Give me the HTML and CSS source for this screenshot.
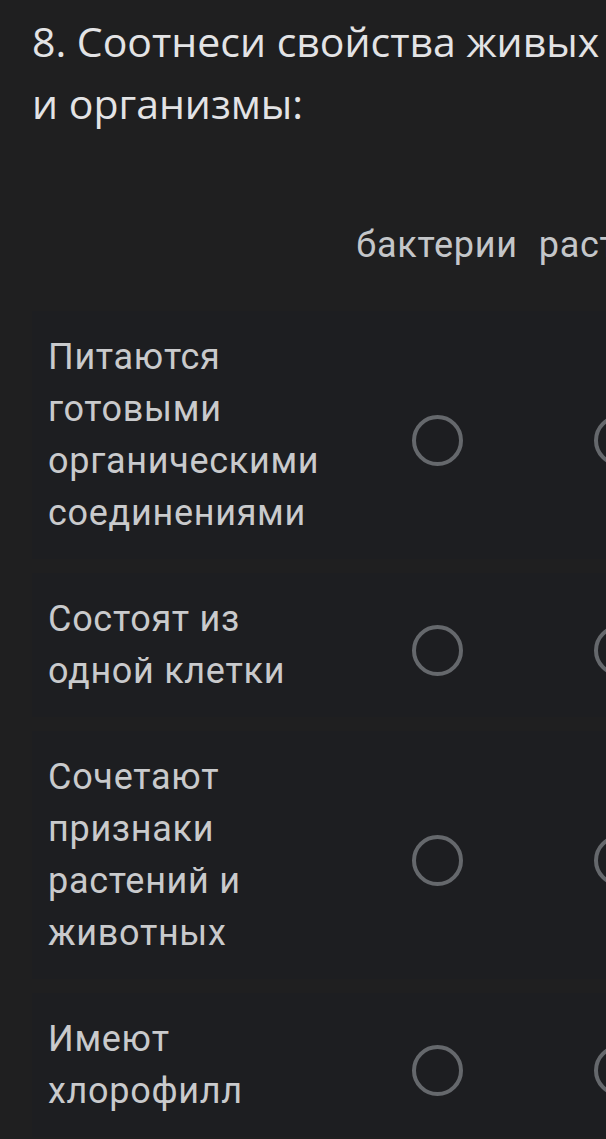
FILE: index.html
```html
<!DOCTYPE html>
<html lang="ru">
<head>
<meta charset="utf-8">
<title>Вопрос 8</title>
<link rel="stylesheet" href="styles.css">
</head>
<body>
<main class="question">
  <h1 class="title">8. Соотнеси свойства живых и организмы:</h1>
  <div class="grid-wrap">
    <div class="grid">
      <div class="grid-head">
        <div class="cell-label"></div>
        <div class="col-title">бактерии</div>
        <div class="col-title">растения</div>
        <div class="col-title">животные</div>
      </div>
      <div class="grid-row">
        <div class="cell-label">Питаются готовыми органическими соединениями</div>
        <div class="cell"><span class="radio"></span></div>
        <div class="cell"><span class="radio"></span></div>
        <div class="cell"><span class="radio"></span></div>
      </div>
      <div class="grid-row">
        <div class="cell-label">Состоят из одной клетки</div>
        <div class="cell"><span class="radio"></span></div>
        <div class="cell"><span class="radio"></span></div>
        <div class="cell"><span class="radio"></span></div>
      </div>
      <div class="grid-row">
        <div class="cell-label">Сочетают признаки растений и животных</div>
        <div class="cell"><span class="radio"></span></div>
        <div class="cell"><span class="radio"></span></div>
        <div class="cell"><span class="radio"></span></div>
      </div>
      <div class="grid-row">
        <div class="cell-label">Имеют хлорофилл</div>
        <div class="cell"><span class="radio"></span></div>
        <div class="cell"><span class="radio"></span></div>
        <div class="cell"><span class="radio"></span></div>
      </div>
    </div>
  </div>
</main>
</body>
</html>
```

FILE: styles.css
```css
html, body {
  margin: 0;
  padding: 0;
  background: #1f1f20;
  overflow: hidden;
}

.question {
  width: 606px;
  overflow: hidden;
  padding-top: 10px;
}

.title {
  margin: 0;
  padding: 0 0 0 32px;
  font-family: "Open Sans", "Roboto", sans-serif;
  font-weight: 400;
  font-size: 41px;
  line-height: 62px;
  color: #e3e3e5;
  letter-spacing: 0;
}

.grid-wrap {
  margin-top: 89px;
  padding-left: 32px;
  overflow: hidden;
}

.grid {
  width: 860px;
  display: flex;
  flex-direction: column;
  gap: 14px;
}

.grid-head,
.grid-row {
  display: grid;
  grid-template-columns: 314px 182px 182px 182px;
  align-items: center;
}

.grid-head {
  height: 44px;
  margin-bottom: 30px;
}

.col-title {
  text-align: center;
  font-family: "Roboto", sans-serif;
  font-size: 36px;
  color: #c4c6c9;
  white-space: nowrap;
  letter-spacing: 0.7px;
}

.grid-row {
  background: #1d1e21;
  padding: 20px 0;
}

.cell-label {
  padding: 0 8px 0 16px;
  font-family: "Roboto", sans-serif;
  font-size: 36px;
  line-height: 52px;
  color: #c9cacc;
  letter-spacing: 0.7px;
}

.cell {
  display: flex;
  justify-content: center;
  align-items: center;
  padding-top: 10px;
}

.radio {
  width: 43px;
  height: 43px;
  border: 4.5px solid #65686c;
  border-radius: 50%;
}
```
